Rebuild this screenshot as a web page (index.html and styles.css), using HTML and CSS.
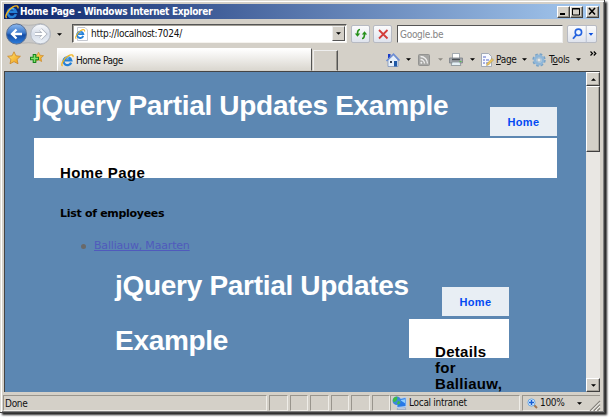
FILE: index.html
```html
<!DOCTYPE html>
<html lang="en">
<head>
<meta charset="utf-8">
<title>Home Page</title>
<link rel="stylesheet" href="styles.css">
</head>
<body>
<svg class="defs" aria-hidden="true">
  <defs>
    <linearGradient id="blue" x1="0" y1="0" x2="0" y2="1"><stop offset="0" stop-color="#8db9f0"/><stop offset=".45" stop-color="#3c79cb"/><stop offset=".55" stop-color="#154da6"/><stop offset="1" stop-color="#2d7fdd"/></linearGradient>
    <linearGradient id="pale" x1="0" y1="0" x2="0" y2="1"><stop offset="0" stop-color="#fafbfd"/><stop offset=".5" stop-color="#d5dce8"/><stop offset="1" stop-color="#edf2f8"/></linearGradient>
    <linearGradient id="gold" x1="0" y1="0" x2="1" y2="1"><stop offset="0" stop-color="#ffe878"/><stop offset="1" stop-color="#f09a10"/></linearGradient>
    <symbol id="ie" viewBox="0 0 14 14">
      <path d="M10.9 9.2A4.2 4.2 0 1 1 11 6.8H4.2" fill="none" stroke="#2581d8" stroke-width="2.5"/>
      <path d="M4 5.2A3.5 3.5 0 0 1 9 4" fill="none" stroke="#6bbcf5" stroke-width="1"/>
      <path d="M1.7 12.9C-.8 11.8 3 5 7.5 2.2 10.5.3 13.7.2 12.9 3.4" fill="none" stroke="#f4b51e" stroke-width="1.4"/>
    </symbol>
    <symbol id="down" viewBox="0 0 6 3"><path d="M0 0h6L3 3z"/></symbol>
    <symbol id="star" viewBox="0 0 14 14"><path d="M7 .8l1.9 4 4.5.5-3.3 3 .9 4.5L7 10.6l-4 2.2.9-4.5-3.3-3 4.5-.5z" fill="url(#gold)" stroke="#c98526" stroke-width=".8"/></symbol>
  </defs>
</svg>
<div class="window">
  <header class="titlebar">
    <svg class="ie-title"><use href="#ie"/></svg>
    <span class="caption">Home Page - Windows Internet Explorer</span>
    <div class="controls">
      <span class="key"><svg viewBox="0 0 10 9"><path d="M2 7h5" stroke="#000" stroke-width="2"/></svg></span>
      <span class="key"><svg viewBox="0 0 10 9"><path d="M1.5 1.5h7v6.5h-7zM1 2h8" fill="none" stroke="#000"/></svg></span>
      <span class="key close"><svg viewBox="0 0 10 9"><path d="M2 1l6 6.5M8 1L2 7.5" stroke="#000" stroke-width="1.6"/></svg></span>
    </div>
  </header>
  <div class="navbar">
    <svg class="travel" viewBox="0 0 48 24">
      <path d="M11 1.5Q24 5 35 1.5A10.5 10.5 0 0 1 35 22.5Q24 19 11 22.5z" fill="#c9c9c9" stroke="#a5a5a5" stroke-width=".6"/>
      <circle cx="11.5" cy="12" r="10" fill="url(#blue)" stroke="#5a7195"/>
      <circle cx="35.5" cy="12" r="9.8" fill="url(#pale)" stroke="#b4bac4"/>
      <path d="M17 12H7.5M11.5 7.5L7 12l4.500 4.500" fill="none" stroke="#fff" stroke-width="2.300"/>
      <path d="M30 12h9.500M35.500 7.500L40 12l-4.500 4.500" fill="none" stroke="#aab0ba" stroke-width="3.600"/>
      <path d="M30 12h9.500M35.500 7.500L40 12l-4.500 4.500" fill="none" stroke="#fff" stroke-width="2.200"/>
    </svg>
    <svg class="arrow history"><use href="#down"/></svg>
    <div class="address">
      <svg class="doc" viewBox="0 0 13 14"><path d="M2.500.5H10L12.500 3v10.500h-10z" fill="#fff" stroke="#b6bac4" stroke-width=".8"/><use href="#ie" x="0" y="2" width="10.500" height="10.500"/></svg>
      <span class="url">http://localhost:7024/</span>
      <span class="drop"><svg class="arrow"><use href="#down"/></svg></span>
    </div>
    <span class="tool refresh"><svg viewBox="0 0 14 14"><path d="M6 2.500Q3.500 2.500 3.500 7M8 11.500Q10.500 11.500 10.500 7" fill="none" stroke="#27911c" stroke-width="1.700"/><path d="M.8 6.500h5.400L3.500 9.700zM7.800 7.500h5.400L10.500 4.300z" fill="#27911c"/></svg></span>
    <span class="tool stop"><svg viewBox="0 0 14 14"><path d="M3 3l8.500 8.500M11.500 3L3 11.500" stroke="#d33e3b" stroke-width="1.800"/></svg></span>
    <span class="search">Google.be</span>
    <span class="tool find"><svg viewBox="0 0 28 18"><circle cx="10.200" cy="6.700" r="3.400" fill="#eef6ff" stroke="#2463df" stroke-width="1.700"/><path d="M8 9.500L4.500 13.500" stroke="#2463df" stroke-width="2"/><path d="M18.500 0v18" stroke="#b8bfce"/><path d="M21 7.500h5l-2.500 2.700z" fill="#0c50df"/></svg></span>
  </div>
  <div class="tabs">
    <svg class="fav"><use href="#star"/></svg>
    <svg class="fav add" viewBox="0 0 14 14"><use href="#star" x="3" y="0" width="11" height="12"/><path d="M4.500 3v9M0 7.500h9" stroke="#16841d" stroke-width="3.600"/><path d="M4.500 4v7M1 7.500h7" stroke="#82e36c" stroke-width="1.500"/></svg>
    <div class="tab"><svg><use href="#ie"/></svg><span>Home Page</span></div>
    <div class="newtab"></div>
    <div class="commands">
      <svg class="home" viewBox="0 0 14 14"><path d="M2 1h2.500v4H2z" fill="#173ac9"/><path d="M2 7v6.500h10V7L7.500 2z" fill="#e5effb" stroke="#7189b8" stroke-width=".7"/><path d="M.5 8L7.500 1l6 6.500" fill="none" stroke="#6c8dd5" stroke-width="1.500"/><path d="M8 8h3v5.500H8z" fill="#1e58a7"/><path d="M4 8h2v2H4z" fill="#303e57"/></svg>
      <svg class="arrow a1"><use href="#down"/></svg>
      <svg class="feed" viewBox="0 0 12 12"><rect x=".5" y=".5" width="11" height="11" rx="1" fill="#a6a6a4" stroke="#939391"/><path d="M2.500 5.500a4 4 0 0 1 4 4M2.500 2.500a7 7 0 0 1 7 7" fill="none" stroke="#eee" stroke-width="1.300"/><circle cx="3.300" cy="8.800" r="1" fill="#eee"/></svg>
      <svg class="arrow a2"><use href="#down"/></svg>
      <svg class="print" viewBox="0 0 14 13"><path d="M3.500.5h7v5h-7z" fill="#fff" stroke="#87909b" stroke-width=".7"/><path d="M.5 5h13v5H.5z" fill="#a4a8ad" stroke="#7c8288" stroke-width=".8"/><path d="M3 6.500h8" stroke="#4b5055" stroke-width="1.500"/><path d="M3 9h8l.8 3.500H2.200z" fill="#e4f0f5" stroke="#788389" stroke-width=".7"/><path d="M10.500 8.500h2" stroke="#57bf4a"/></svg>
      <svg class="arrow a3"><use href="#down"/></svg>
      <svg class="page-icon" viewBox="0 0 14 14"><path d="M1.500.5h7l3 3v10h-10z" fill="#f8faff" stroke="#929cac" stroke-width=".8"/><path d="M3 4h3M3 7h2M6 7h3M3 10h2M6 10h3" stroke="#5668c8"/><path d="M7 10.500l5-5 1.500 1.500-5 5-2 .5z" fill="#efc85a" stroke="#a1864a" stroke-width=".5"/></svg>
      <span class="page-label"><u>P</u>age</span><svg class="arrow a4"><use href="#down"/></svg>
      <svg class="gear" viewBox="0 0 14 14"><circle cx="7" cy="7" r="5.800" fill="none" stroke="#78a2c6" stroke-width="1.800" stroke-dasharray="2.600 1.955"/><circle cx="7" cy="7" r="4" fill="#e0e8ed" stroke="#8fb6d8" stroke-width="2.800"/><circle cx="7" cy="7" r="2" fill="#e6e6e3" stroke="#779cbb" stroke-width=".6"/></svg>
      <span class="tools-label">T<u>o</u>ols</span><svg class="arrow a5"><use href="#down"/></svg>
      <svg class="more" viewBox="0 0 7 5"><path d="M.5.5l2 2-2 2M3.800.5l2 2-2 2" fill="none" stroke="#000" stroke-width="1.200"/></svg>
    </div>
  </div>
  <div class="viewport">
    <main class="page">
      <section class="site">
        <div class="masthead"><h1>jQuery Partial Updates Example</h1><a class="menu">Home</a></div>
        <div class="panel"><h2>Home Page</h2></div>
        <h3>List of employees</h3>
        <ul><li><a>Balliauw, Maarten</a></li></ul>
      </section>
      <section class="partial">
        <h1>jQuery Partial Updates<br>Example</h1>
        <div class="side"><a class="menu">Home</a><div class="panel"><h2>Details<br>for<br>Balliauw,</h2></div></div>
      </section>
    </main>
    <div class="scrollbar"><span class="sb"><svg class="arrow up"><use href="#down"/></svg></span><span class="thumb"></span><span class="sb bottom"><svg class="arrow"><use href="#down"/></svg></span></div>
  </div>
  <footer class="status">
    <span class="done">Done</span><span></span><span></span><span></span><span></span><span></span><span></span>
    <span class="zone"><svg viewBox="0 0 15 14"><path d="M6 11h7l1 2.500H5z" fill="#bcc9dc" stroke="#8195b5" stroke-width=".5"/><path d="M5 3l9-1.500v9L5 11.500z" fill="#2879e6" stroke="#b9d4f3" stroke-width=".9"/><path d="M8 4l5-.8v4z" fill="#8fd0ff"/><circle cx="4.800" cy="4.800" r="4.300" fill="#3c86dc"/><path d="M1 3Q3 0 5.500.8L5 4 3 6 1 5.500zM6 5l2.500 1L7 8.500 5 8z" fill="#3dbd43"/></svg><b>Local intranet</b></span>
    <span class="zoom"><svg class="mag" viewBox="0 0 11 11"><path d="M6.500 6.500l3.500 3.500" stroke="#a37650" stroke-width="2"/><circle cx="4.500" cy="4.500" r="3.600" fill="#d8edff" stroke="#68a7e4"/><path d="M4.500 2v5M2 4.500h5" stroke="#165ed5" stroke-width="1.500"/></svg><b>100%</b><svg class="arrow"><use href="#down"/></svg><svg class="grip" viewBox="0 0 11 11"><path d="M0 11L11 0M4 11l7-7M8 11l3-3" stroke="#85827b" stroke-width="1.300"/><path d="M1.500 11L11 1.500M5.500 11L11 5.500" stroke="#fff" stroke-width=".8"/></svg></span>
  </footer>
</div>
</body>
</html>
```

FILE: styles.css
```css
* { box-sizing: border-box; }
body { margin: 0; width: 609px; height: 418px; overflow: hidden; background: #fff; font: 10px/14px "DejaVu Sans Condensed", "DejaVu Sans", sans-serif; letter-spacing: -.3px; color: #111; }
svg { display: block; flex: none; overflow: visible; }
.defs { position: absolute; width: 0; height: 0; }
.window { width: 605px; height: 413px; padding: 4px 4px 0; background: #d4d0c8; border: solid #404040; border-width: 0 1px 1px 0; box-shadow: inset 1px 1px #dedbd3, inset 2px 2px #fff, inset -1px -1px #808080, 2px 2px 2px #222; }
.arrow { width: 5px; height: 3px; fill: #000; }

.titlebar { height: 15px; display: flex; align-items: center; background: linear-gradient(90deg, #0a246a, #a6caf0); color: #fff; padding-left: 1px; }
.ie-title { width: 14px; height: 14px; margin-right: 1px; }
.caption { font: bold 10px/14px "DejaVu Sans Condensed", sans-serif; white-space: nowrap; }
.controls { margin-left: auto; display: flex; padding-right: 1px; }
.key { width: 13px; height: 12px; background: #d4d0c8; border: 1px solid; border-color: #fff #404040 #404040 #fff; box-shadow: inset -1px -1px #969389; }
.key svg { width: 10px; height: 9px; }
.key.close { margin-left: 3px; }

.navbar { height: 29px; display: flex; align-items: center; }
.travel { width: 48px; height: 24px; margin-left: 1px; }
.history { margin: 2px 10px 0 4px; }
.address { width: 275px; height: 19px; display: flex; align-items: center; background: #fff; border: 1px solid; border-color: #555 #f5f3ef #f5f3ef #555; box-shadow: inset 1px 1px #a19e96; }
.doc { width: 13px; height: 14px; margin-left: 2px; }
.url { margin-left: 3px; letter-spacing: -.27px; }
.drop { margin-left: auto; width: 13px; height: 15px; margin-right: 1px; display: grid; place-items: center; background: #d4d0c8; border: 1px solid; border-color: #eee #555 #555 #eee; }
.tool { height: 18px; background: linear-gradient(#fbfbfc, #dfe3ed); border: 1px solid #b7bac3; border-radius: 2px; display: grid; place-items: center; flex: none; }
.refresh { width: 19px; margin-left: 4px; }
.stop { width: 19px; margin-left: 3px; }
.tool svg { width: 14px; height: 14px; }
.search { width: 166px; height: 18px; margin-left: 5px; background: #fff; border: 1px solid; border-color: #555 #eee #eee #555; padding-left: 2px; line-height: 17px; color: #858585; }
.find { width: 30px; margin-left: 4px; }
.tool.find svg { width: 28px; height: 17px; }

.tabs { height: 23px; display: flex; align-items: flex-start; }
.fav { width: 14px; height: 14px; margin: 3px 0 0 3px; }
.fav.add { margin-left: 9px; }
.tab { width: 255px; height: 23px; margin-left: 13px; display: flex; align-items: center; background: linear-gradient(#fff, #dcd9d2 95%); border: 1px solid; border-color: #fff #555 #d4d0c8 #fff; padding: 2px 0 0 3px; letter-spacing: -.5px; flex: none; }
.tab svg { width: 13px; height: 13px; margin-right: 2px; }
.newtab { width: 25px; height: 21px; margin: 2px 0 0 1px; border: 1px solid; border-color: #eee #555 #d4d0c8 #eee; box-shadow: inset -1px 0 #96938b; flex: none; }
.commands { display: flex; align-items: center; height: 23px; margin-left: 48px; flex: none; }
.home { width: 14px; height: 14px; }
.a1 { margin-left: 6px; }
.feed { width: 12px; height: 12px; margin-left: 7px; }
.a2 { margin-left: 8px; fill: #8d8a83; }
.print { width: 14px; height: 13px; margin-left: 6px; }
.a3 { margin-left: 7px; }
.page-icon { width: 14px; height: 14px; margin-left: 5px; }
.page-label { width: 23px; margin-left: 2px; }
.a4 { margin-left: 3px; }
.gear { width: 14px; height: 14px; margin-left: 5px; }
.tools-label { width: 24px; margin-left: 3px; }
.a5 { margin-left: 3px; }
.more { width: 7px; height: 5px; margin: -12px 0 0 9px; }

.viewport { height: 321px; display: flex; border-top: 1px solid #444; border-left: 1px solid #444; }
.page { width: 581px; height: 320px; overflow: hidden; background: #5c87b2; padding: 0 29px; font-family: "DejaVu Sans", sans-serif; }
h1, h2, h3, ul { margin: 0; }
h1 { font: bold 28px/55px "Liberation Sans", sans-serif; letter-spacing: -.3px; color: #fff; white-space: nowrap; }
.masthead { height: 66px; display: flex; justify-content: space-between; }
.masthead h1 { padding-top: 6px; }
.menu { width: 67px; height: 29px; background: #e8eef4; color: #034af3; font: bold 11px/30px "Liberation Sans", sans-serif; letter-spacing: .3px; text-align: center; }
.masthead .menu { margin-top: 35px; }
.panel { height: 40px; background: #fff; padding: 27px 0 0 26px; }
h2 { font: bold 15px/16px "Liberation Sans", sans-serif; letter-spacing: .4px; color: #000; }
h3 { margin: 29px 0 0 26px; font: bold 11px/14px "DejaVu Sans", sans-serif; color: #000; }
ul { margin-top: 17px; padding-left: 60px; font-size: 11px; line-height: 16px; letter-spacing: -.18px; color: #696969; list-style: none; }
li { display: flex; align-items: center; }
li::before { content: ""; width: 5px; height: 5px; margin: 1px 8px 0 -13px; border-radius: 50%; background: #696969; }
li a { color: #505abc; text-decoration: underline; }
.partial { margin-left: 81px; width: 394px; display: flex; justify-content: space-between; padding-top: 4px; }
.side { width: 100px; margin: 29px 0 0 -20px; }
.side .menu { display: block; margin: 0 0 3px auto; }
.side .panel { height: 39px; padding-top: 25px; }
.side h2 { letter-spacing: .3px; }

.scrollbar { width: 14px; display: flex; flex-direction: column; background: #e9e7e3; }
.sb, .thumb { background: #d4d0c8; border: 1px solid; border-color: #fff #404040 #404040 #fff; box-shadow: inset -1px -1px #aaa69e; }
.sb { height: 14px; display: grid; place-items: center; }
.up { transform: scaleY(-1); }
.thumb { height: 66px; }
.bottom { margin-top: auto; }

.status { height: 16px; margin-top: 3px; display: flex; gap: 2px; }
.status > span { width: 18.5px; border: 1px solid; border-color: #99958d #efede8 #efede8 #99958d; flex: none; }
.status > .done { width: 264px; line-height: 15px; margin-left: -1px; padding-left: 1px; }
.status > .zone { width: 130px; margin-left: -2px; display: flex; align-items: center; padding-left: 1px; }
.zone svg { width: 15px; height: 14px; margin-right: 2px; }
.status b { font-weight: normal; }
.status > .zoom { width: auto; flex: 1; display: flex; align-items: center; padding-left: 4px; border-right: 0; }
.mag { width: 11px; height: 11px; margin-right: 2px; }
.zoom .arrow { margin-left: 12px; }
.grip { width: 10px; height: 10px; margin: 5px 0 0 auto; }
```
